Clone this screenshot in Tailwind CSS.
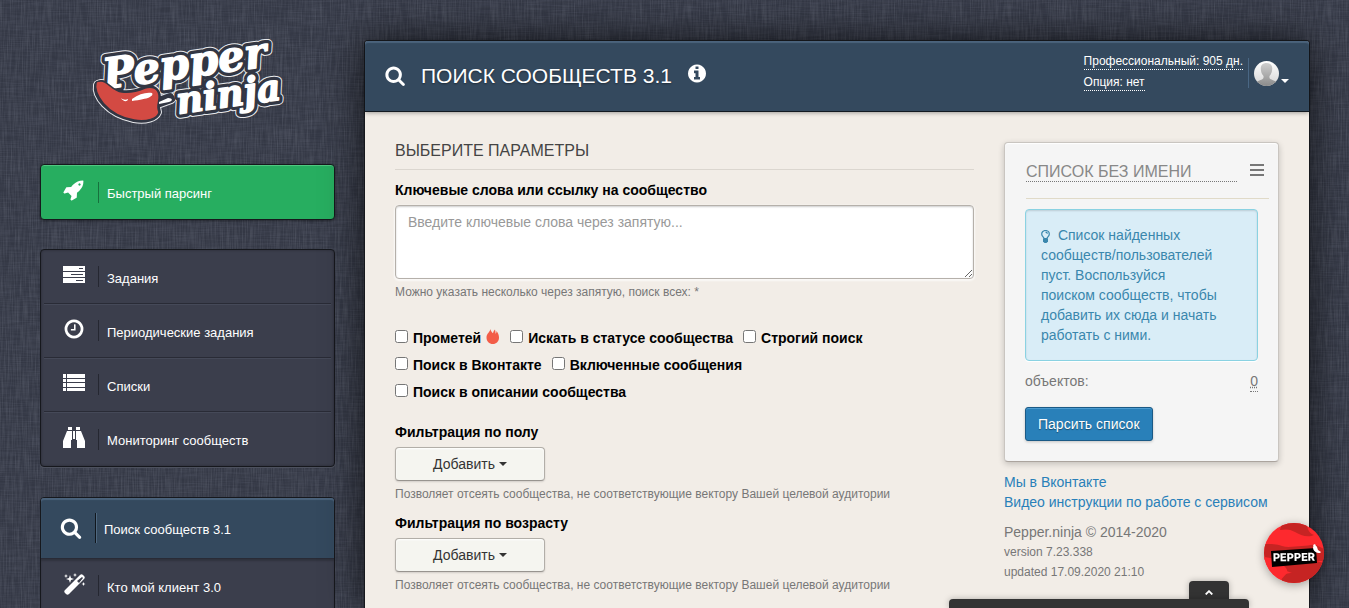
<!DOCTYPE html>
<html lang="ru">
<head>
    <meta charset="UTF-8">
    <meta name="viewport" content="width=device-width, initial-scale=1.0">
    <title>Поиск сообществ 3.1 - Pepper.ninja</title>
    <script src="https://cdn.jsdelivr.net/npm/@tailwindcss/browser@4"></script>
</head>
<body class="relative h-screen overflow-hidden bg-[#343845] font-['Liberation_Sans',Arial,sans-serif] text-sm leading-5 text-[#777]">

    <!-- Фоновая текстура -->
    <svg class="absolute inset-0 -z-10 size-full" aria-hidden="true">
        <filter id="linenH" x="0" y="0" width="100%" height="100%">
            <feTurbulence type="fractalNoise" baseFrequency="0.04 0.8" numOctaves="2" seed="3"/>
            <feColorMatrix values="0 0 0 0 0.08  0 0 0 0 0.09  0 0 0 0 0.13  0.7 0 0 0 -0.24"/>
        </filter>
        <filter id="linenV" x="0" y="0" width="100%" height="100%">
            <feTurbulence type="fractalNoise" baseFrequency="0.8 0.04" numOctaves="2" seed="8"/>
            <feColorMatrix values="0 0 0 0 0.45  0 0 0 0 0.48  0 0 0 0 0.56  0.3 0 0 0 -0.11"/>
        </filter>
        <rect width="100%" height="100%" filter="url(#linenH)"/>
        <rect width="100%" height="100%" filter="url(#linenV)"/>
    </svg>

    <div class="flex items-start gap-[30px] pl-10 pr-10">

        <!-- Боковая панель -->
        <aside class="w-[295px] shrink-0 pt-[35px] text-[13px] text-white">
            <a href="#" class="flex h-[95px] justify-center" aria-label="Pepper ninja">
                <svg class="h-[95px] w-[200px] overflow-visible" viewBox="0 0 200 95">
                    <g font-family="DejaVu Serif, serif" font-weight="700" font-style="italic" stroke-linejoin="round" stroke-linecap="round">
                        <g fill="#e8e9ec" stroke="#e8e9ec" stroke-width="10">
                            <text x="17" y="54" font-size="42" transform="rotate(-8 17 54)">Pepper</text>
                            <text x="90" y="79" font-size="37" transform="rotate(-8 90 79)">ninja</text>
                            <path d="M10 50C8 60 20 78 46 83C58 85 67 82 69 77C66 70 70 66 69 61C68 55 64 53 57 55C50 58 42 60 34 59C24 58 20 49 13 49z"/>
                            <path d="M71 66L82 62L83 64L72 68z"/>
                        </g>
                        <g fill="#323643" stroke="#323643" stroke-width="8">
                            <text x="17" y="54" font-size="42" transform="rotate(-8 17 54)">Pepper</text>
                            <text x="90" y="79" font-size="37" transform="rotate(-8 90 79)">ninja</text>
                            <path d="M10 50C8 60 20 78 46 83C58 85 67 82 69 77C66 70 70 66 69 61C68 55 64 53 57 55C50 58 42 60 34 59C24 58 20 49 13 49z"/>
                            <path d="M71 66L82 62L83 64L72 68z"/>
                        </g>
                        <g fill="#fff" stroke="#fff" stroke-width="1.500">
                            <text x="17" y="54" font-size="42" transform="rotate(-8 17 54)">Pepper</text>
                            <text x="90" y="79" font-size="37" transform="rotate(-8 90 79)">ninja</text>
                        </g>
                    </g>
                    <path d="M8 48C5 58 18 80 46 85C58 87 70 84 71 77C68 70 72 66 71 60C70 53 64 51 57 53C50 56 42 58 34 57C24 56 20 46 13 46C10 46 8 47 8 48z" fill="#d34a43" stroke="#323643" stroke-width="1.500"/>
                    <path d="M44 64C51 59 58 57 64 58C66 61 61 64 44 66zM33 63C35 65 38 65 40 64C40 67 35 67 33 63zM71 67L80 63C85 63 85 66 81 67L71 69z" fill="#fff"/>
                </svg>
            </a>

            <a href="#" class="mt-[34px] flex h-[56px] items-center rounded-[4px] border border-[#16181d] bg-[#27ae60] pl-[21px] shadow-[inset_0_1px_0_#4fc981,0_1px_3px_#0006]">
                <svg class="h-[22px] w-6 shrink-0 -translate-y-0.5" viewBox="0 0 1792 1792" fill="currentColor"><path d="M1440 448q0-40-28-68t-68-28-68 28-28 68 28 68 68 28 68-28 28-68zm224-288q0 249-75.5 430.5t-253.5 360.5q-81 80-195 176l-20 379q-2 16-16 26l-384 224q-7 4-16 4-12 0-23-9l-64-64q-13-14-8-32l85-276-281-281-276 85q-3 1-9 1-14 0-23-9l-64-64q-17-19-5-39l224-384q10-14 26-16l379-20q96-114 176-195 188-187 358-258t431-71q14 0 24 9.5t10 22.5z"/></svg>
                <span class="ml-3 mr-2 h-[21px] border-l border-[#17703d]"></span>
                <span class="pt-1">Быстрый парсинг</span>
            </a>

            <nav class="mt-[29px] rounded-[4px] border border-[#16181d] bg-[#3b3e4c] px-[3px] shadow-[0_1px_0_#4d515e,inset_0_0_3px_#0005]">
                <a href="#" class="flex h-[54px] items-center border-b border-[#292b36] pl-[18px] shadow-[0_1px_0_#454958]">
                    <svg class="h-5 w-6 shrink-0 -translate-y-0.5" viewBox="0 0 24 20" fill="currentColor" fill-rule="evenodd"><path d="M1 1h22v5H1zM17 3v1h4V3zM1 7h22v5H1zM9 9v1h12V9zM1 13h22v5H1zM14 15v1h7v-1z"/></svg>
                    <span class="ml-3 mr-2 h-[21px] border-l border-[#252731]"></span>
                    <span class="pt-1">Задания</span>
                </a>
                <a href="#" class="flex h-[54px] items-center border-b border-[#292b36] pl-[18px] shadow-[0_1px_0_#454958]">
                    <svg class="h-[22px] w-6 shrink-0 -translate-y-0.5" viewBox="0 0 1792 1792" fill="currentColor"><path d="M1024 544v448q0 14-9 23t-23 9h-320q-14 0-23-9t-9-23v-64q0-14 9-23t23-9h224v-352q0-14 9-23t23-9h64q14 0 23 9t9 23zm416 352q0-148-73-273t-198-198-273-73-273 73-198 198-73 273 73 273 198 198 273 73 273-73 198-198 73-273zm224 0q0 209-103 385.5t-279.5 279.5-385.5 103-385.5-103-279.5-279.5-103-385.5 103-385.5 279.5-279.5 385.5-103 385.5 103 279.5 279.5 103 385.5z"/></svg>
                    <span class="ml-3 mr-2 h-[21px] border-l border-[#252731]"></span>
                    <span class="pt-1">Периодические задания</span>
                </a>
                <a href="#" class="flex h-[54px] items-center border-b border-[#292b36] pl-[18px] shadow-[0_1px_0_#454958]">
                    <svg class="h-5 w-6 shrink-0 -translate-y-0.5" viewBox="0 0 24 20" fill="currentColor"><path d="M1 1h3v4H1zM5 1h18v4H5zM1 6h3v3H1zM5 6h18v3H5zM1 10h3v4H1zM5 10h18v4H5zM1 15h3v3H1zM5 15h18v3H5z"/></svg>
                    <span class="ml-3 mr-2 h-[21px] border-l border-[#252731]"></span>
                    <span class="pt-1">Списки</span>
                </a>
                <a href="#" class="flex h-[54px] items-center pl-[18px]">
                    <svg class="h-[22px] w-6 shrink-0 -translate-y-0.5" viewBox="0 0 24 22" fill="currentColor"><path d="M6 1h4v3H6zM14 1h4v3h-4zM5 5h5v9H9v8H1v-7zM14 5h5l4 10v7h-8v-8h-1zM11 5h2v8h-2z"/></svg>
                    <span class="ml-3 mr-2 h-[21px] border-l border-[#252731]"></span>
                    <span class="pt-1">Мониторинг сообществ</span>
                </a>
            </nav>

            <nav class="mt-[30px] rounded-[4px] border border-[#16181d] bg-[#3b3e4c] shadow-[0_1px_0_#4d515e]">
                <a href="#" class="flex h-[60px] items-center rounded-t-[3px] bg-[#34495e] pl-[18px] shadow-[inset_0_2px_1px_#4b637c]">
                    <svg class="h-[22px] w-6 shrink-0" viewBox="0 0 1792 1792" fill="currentColor"><path d="M1216 832q0-185-131.500-316.500t-316.500-131.500-316.500 131.500-131.500 316.500 131.500 316.500 316.500 131.500 316.500-131.500 131.500-316.500zm512 832q0 52-38 90t-90 38q-54 0-90-38l-343-342q-179 124-399 124-143 0-273.500-55.500t-225-150-150-225-55.500-273.500 55.500-273.500 150-225 225-150 273.500-55.500 273.500 55.500 225 150 150 225 55.500 273.500q0 220-124 399l343 343q37 37 37 90z"/></svg>
                    <span class="ml-3 mr-[7px] h-[30px] border-l border-r border-l-[#10161d] border-r-[#4f6880]"></span>
                    <span class="pt-1">Поиск сообществ 3.1</span>
                </a>
                <a href="#" class="flex h-[54px] items-center border-t border-[#292b36] pl-[21px] shadow-[inset_0_2px_2px_#0003]">
                    <svg class="h-[22px] w-6 shrink-0 -translate-y-0.5" viewBox="0 0 24 22" fill="currentColor" fill-rule="evenodd"><path d="M3 17L18 2c1-1 2-1 3 0l1 1c1 1 1 2 0 3L7 21c-1 1-2 1-3 0l-1-1c-1-1-1-2 0-3zM15 8l2 2 4-5-1-1zM8 2l1 3 3 1-3 1-1 3-1-3-3-1 3-1zM4 1l.6 1.400 1.400.6-1.400.6L4 5l-.6-1.400L2 3l1.400-.6zM13 0l.6 1.400 1.400.6-1.400.6L13 4l-.6-1.400L11 2l1.400-.6zM21.500 9l.6 1.400 1.400.6-1.400.6-.6 1.400-.6-1.400-1.400-.6 1.400-.6z"/></svg>
                    <span class="ml-3 mr-2 h-[21px] border-l border-[#252731]"></span>
                    <span class="pt-1">Кто мой клиент 3.0</span>
                </a>
            </nav>
        </aside>

        <!-- Основная область -->
        <main class="mt-[41px] h-[calc(100vh-41px)] min-w-0 flex-1 rounded-t-[3px] bg-[#f2ede7] shadow-[0_0_0_1px_#16181d,0_0_40px_#000b]">
            <header class="flex h-[71px] items-center rounded-t-[3px] border-b border-[#131a22] bg-[#34495e] pl-5 pr-5 text-white shadow-[inset_0_2px_1px_#4b637c,0_1px_4px_#0005]">
                <svg class="mb-0.5 size-[21px]" viewBox="64 0 1728 1792" fill="currentColor"><path d="M1216 832q0-185-131.500-316.500t-316.500-131.500-316.500 131.500-131.500 316.500 131.500 316.500 316.500 131.500 316.500-131.500 131.500-316.500zm512 832q0 52-38 90t-90 38q-54 0-90-38l-343-342q-179 124-399 124-143 0-273.500-55.500t-225-150-150-225-55.500-273.500 55.500-273.500 150-225 225-150 273.500-55.500 273.500 55.500 225 150 150 225 55.500 273.500q0 220-124 399l343 343q37 37 37 90z"/></svg>
                <h1 class="ml-[15px] text-[21px] leading-6 [text-shadow:0_1px_2px_#0006]">ПОИСК СООБЩЕСТВ 3.1</h1>
                <button type="button" class="ml-4 pb-1.5" aria-label="Информация">
                    <svg class="size-[21px]" viewBox="128 0 1792 1792" fill="currentColor"><path d="M1152 1376v-160q0-14-9-23t-23-9h-96v-512q0-14-9-23t-23-9h-320q-14 0-23 9t-9 23v160q0 14 9 23t23 9h96v320h-96q-14 0-23 9t-9 23v160q0 14 9 23t23 9h448q14 0 23-9t9-23zm-128-896v-160q0-14-9-23t-23-9h-192q-14 0-23 9t-9 23v160q0 14 9 23t23 9h192q14 0 23-9t9-23zm640 416q0 209-103 385.500t-279.500 279.500-385.500 103-385.500-103-279.500-279.500-103-385.500 103-385.500 279.500-279.500 385.500-103 385.500 103 279.500 279.500 103 385.500z"/></svg>
                </button>
                <div class="ml-auto flex flex-col items-start gap-[5px] pb-2 text-xs leading-[15px]">
                    <a href="#" class="border-b border-dotted border-white">Профессиональный: 905 дн.</a>
                    <a href="#" class="border-b border-dotted border-white">Опция: нет</a>
                </div>
                <button type="button" class="mb-1.5 ml-[5px] flex h-[30px] items-center gap-0.5 border-l border-[#4a6784] pl-[5px]" aria-label="Профиль">
                    <svg class="size-[25px]" viewBox="0 0 25 25">
                        <defs>
                            <linearGradient id="avaBg" x1="0" y1="0" x2="0" y2="1"><stop offset="0" stop-color="#fff"/><stop offset="1" stop-color="#d5d5d5"/></linearGradient>
                            <linearGradient id="avaFg" x1="0" y1="0" x2="0" y2="1"><stop offset="0" stop-color="#cfcfcf"/><stop offset="1" stop-color="#8b8b8b"/></linearGradient>
                            <clipPath id="avaClip"><circle cx="12.5" cy="12.5" r="12.5"/></clipPath>
                        </defs>
                        <g clip-path="url(#avaClip)">
                            <path d="M0 0h25v25H0z" fill="url(#avaBg)"/>
                            <path d="M12.500 2C8.500 2 6.500 4.500 6.800 8c.1 3 1 5 2.700 7 .3 2-.2 3-3 4L2 21v4h21v-4l-4.500-2c-2.800-1-3.300-2-3-4 1.700-2 2.600-4 2.700-7C18.500 4.500 16.500 2 12.500 2z" fill="url(#avaFg)"/>
                        </g>
                    </svg>
                    <svg class="mt-4 h-1 w-2" viewBox="0 0 8 4" fill="currentColor"><path d="M0 0h8L4 4z"/></svg>
                </button>
            </header>

            <div class="flex items-start gap-[30px] px-[30px] pt-[30px]">
                <form class="min-w-0 flex-1 text-black">
                    <h2 class="border-b border-[#dbd6cf] pb-[9px] text-base leading-[18px] text-[#444]">ВЫБЕРИТЕ ПАРАМЕТРЫ</h2>

                    <label for="keywords" class="mt-2.5 block font-bold">Ключевые слова или ссылку на сообщество</label>
                    <textarea id="keywords" placeholder="Введите ключевые слова через запятую..." class="mt-[5px] block h-[74px] w-full rounded-[4px] border border-[#b5b0aa] bg-white px-3 py-1.5 shadow-[inset_0_1px_2px_#0003,0_1px_2px_1px_#fffa] placeholder:text-[#999]"></textarea>
                    <p class="mt-[5px] text-xs leading-4 text-[#777]">Можно указать несколько через запятую, поиск всех: *</p>

                    <div class="mt-7 flex flex-wrap gap-x-2.5 gap-y-[7px] font-bold">
                        <label class="flex items-center gap-[5px]"><input type="checkbox" class="mb-[3px] size-[13px]">Прометей
                            <svg class="mb-1 h-[15px] w-3.5" viewBox="0 0 14 15"><path d="M4.500 0C4 3 .5 4.500.5 8.500c0 4 2.800 6.500 6.300 6.500S13 12.500 13 8.500c0-2.500-1-4.500-2.500-6.500 0 1.500-.3 2.200-1 2.800C9.500 3.500 9.500 2 9 .5 8 1.500 7.500 2.500 7 4.200 5.800 3.500 4.800 2 4.500 0z" fill="#f35d48"/></svg>
                        </label>
                        <label class="flex items-center gap-[5px]"><input type="checkbox" class="mb-[3px] size-[13px]">Искать в статусе сообщества</label>
                        <label class="flex items-center gap-[5px]"><input type="checkbox" class="mb-[3px] size-[13px]">Строгий поиск</label>
                        <label class="flex items-center gap-[5px]"><input type="checkbox" class="mb-[3px] size-[13px]">Поиск в Вконтакте</label>
                        <label class="flex items-center gap-[5px]"><input type="checkbox" class="mb-[3px] size-[13px]">Включенные сообщения</label>
                        <label class="flex items-center gap-[5px]"><input type="checkbox" class="mb-[3px] size-[13px]">Поиск в описании сообщества</label>
                    </div>

                    <div class="mt-5">
                        <label for="gender" class="block font-bold">Фильтрация по полу</label>
                        <button id="gender" type="button" class="mt-[5px] flex h-[34px] w-[150px] items-center justify-center gap-1 rounded-[4px] border border-[#b2aea8] border-b-[#98948f] bg-[#f5f5f0] text-[#333] shadow-[inset_0_1px_2px_#fff,0_1px_2px_#0002]">Добавить
                            <svg class="h-1 w-2" viewBox="0 0 8 4" fill="currentColor"><path d="M0 0h8L4 4z"/></svg>
                        </button>
                        <p class="mt-[5px] text-xs leading-4 text-[#777]">Позволяет отсеять сообщества, не соответствующие вектору Вашей целевой аудитории</p>
                    </div>

                    <div class="mt-[11px]">
                        <label for="age" class="block font-bold">Фильтрация по возрасту</label>
                        <button id="age" type="button" class="mt-[5px] flex h-[34px] w-[150px] items-center justify-center gap-1 rounded-[4px] border border-[#b2aea8] border-b-[#98948f] bg-[#f5f5f0] text-[#333] shadow-[inset_0_1px_2px_#fff,0_1px_2px_#0002]">Добавить
                            <svg class="h-1 w-2" viewBox="0 0 8 4" fill="currentColor"><path d="M0 0h8L4 4z"/></svg>
                        </button>
                        <p class="mt-[5px] text-xs leading-4 text-[#777]">Позволяет отсеять сообщества, не соответствующие вектору Вашей целевой аудитории</p>
                    </div>
                </form>

                <div class="w-[275px] shrink-0">
                    <section class="rounded-[4px] border border-[#c9c5c0] border-b-[#aba49e] bg-[#f5f5f5] pb-5 pl-5 shadow-[inset_0_1px_1px_#fff,0_2px_6px_#0003]">
                        <div class="mr-[9px] ml-px flex items-start justify-between border-b border-[#e0dac8] pb-4 pt-5">
                            <button type="button" class="w-[211px] border-b border-dotted border-[#777] text-left text-base leading-[18px] text-[#888]">СПИСОК БЕЗ ИМЕНИ</button>
                            <button type="button" class="mr-[5px] mt-px" aria-label="Меню">
                                <svg class="h-3 w-3.5" viewBox="0 0 14 12" fill="#777"><path d="M0 0h14v2H0zM0 5h14v2H0zM0 10h14v2H0z"/></svg>
                            </button>
                        </div>
                        <div class="mr-5 mt-2.5 rounded-[4px] border border-[#8ad2e2] bg-[#d9edf7] py-[15px] pl-[15px] pr-[35px] text-[#3a87ad] shadow-[inset_0_1px_2px_#0002,0_1px_0_#fff]">
                            <svg class="mr-1 inline-block h-[13px] w-[9px] align-text-bottom" viewBox="0 0 9 13" fill="none" stroke="currentColor" stroke-width="1.200"><path d="M3 8.500C3 7 .7 6.500.7 4a3.800 3.500 0 0 1 7.600 0C8.300 6.500 6 7 6 8.500zM4.500 2.200c1 0 1.800.5 1.800 1.500"/><path d="M2 8.500h5v3L5.500 13h-2L2 11.500z" fill="currentColor" stroke="none"/></svg>
                            Список найденных сообществ/пользователей пуст. Воспользуйся поиском&nbsp;сообществ, чтобы добавить их сюда и начать работать с ними.
                        </div>
                        <div class="mr-5 mt-2.5 flex items-start justify-between">
                            <span>объектов:</span>
                            <a href="#" class="border-b border-dotted border-[#777] underline decoration-dotted">0</a>
                        </div>
                        <button type="button" class="mt-[15px] h-[34px] rounded-[3px] border border-[#1b5a86] bg-[#2980b9] px-3 text-white shadow-[inset_0_1px_0_#4c9bd0,0_1px_3px_#0003] [text-shadow:0_1px_1px_#0006]">Парсить список</button>
                    </section>

                    <div class="mt-2.5 flex flex-col items-start whitespace-nowrap text-[#2980b9]">
                        <a href="#">Мы в Вконтакте</a>
                        <a href="#">Видео инструкции по работе с сервисом</a>
                    </div>
                    <p class="mt-2.5">Pepper.ninja © 2014-2020</p>
                    <p class="text-xs leading-5">version 7.23.338</p>
                    <p class="text-xs leading-5">updated 17.09.2020 21:10</p>
                </div>
            </div>
        </main>
    </div>

    <!-- Выдвижная панель -->
    <div class="fixed bottom-0 right-[100px] flex w-[300px] flex-col items-end">
        <button type="button" class="mr-5 flex h-[18px] w-10 items-center justify-center rounded-t-[4px] bg-[#333] shadow-[0_0_6px_#0004]" aria-label="Развернуть">
            <svg class="mt-1 h-[5px] w-2" viewBox="0 0 8 5" fill="none" stroke="#fff" stroke-width="1.800"><path d="M.7 4.500L4 1.200l3.300 3.300"/></svg>
        </button>
        <div class="h-[9px] w-full rounded-t-[4px] bg-[#333] shadow-[0_0_6px_#0004]"></div>
    </div>

    <!-- Виджет чата -->
    <button type="button" class="fixed bottom-[25px] right-[25px] size-[60px] rounded-full shadow-[0_2px_10px_#0005]" aria-label="Pepper">
        <svg class="size-[60px]" viewBox="0 0 60 60">
            <clipPath id="chatClip"><circle cx="30" cy="30" r="30"/></clipPath>
            <g clip-path="url(#chatClip)">
                <path d="M0 0h60v60H0z" fill="#fd292e"/>
                <path d="M18 0h25c0 6 2 10 7 12-6 3-14 0-19-3S22 6 16 7zM0 21c8 0 12 0 18 2s14 0 20 0 9-2 14-1l8 4v12H0zM60 40v20H20c-6-5 0-10 8-10-8-3-12-5-10-10l30-3z" fill="#c62423"/>
                <path d="M0 34c10 1 14 3 18 7s6 5 5 9L14 60H0z" fill="#fd292e"/>
            </g>
            <path d="M7 28l45-3 1 15-45 4z" fill="#000"/>
            <text x="30" y="38" text-anchor="middle" transform="rotate(-1 30 35)" font-family="Inter, sans-serif" font-weight="800" font-size="11" fill="#fff">PEPPER</text>
            <path d="M49 24c1-2 3-2 4 0l1 3 3 2-1 1c-4 0-7-2-7-6zM49 22l2-1 1 2-2 1z" fill="#fff"/>
        </svg>
    </button>

</body>
</html>
